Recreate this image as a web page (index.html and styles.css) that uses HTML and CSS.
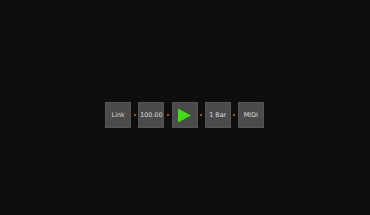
FILE: index.html
```html
<!DOCTYPE html>
<html>
<head>
<meta charset="utf-8">
<link rel="stylesheet" href="styles.css">
</head>
<body>
<div class="stage">
  <div class="bar">
    <div class="btn"><span>Link</span></div>
    <div class="dot"></div>
    <div class="btn"><span>100.00</span></div>
    <div class="dot"></div>
    <div class="btn play">
      <svg width="15" height="15" viewBox="0 0 15 15"><polygon points="1,0.5 14,7.5 1,14.5" fill="#3ee10f"/></svg>
    </div>
    <div class="dot"></div>
    <div class="btn"><span>1 Bar</span></div>
    <div class="dot"></div>
    <div class="btn"><span>MIDI</span></div>
  </div>
</div>
</body>
</html>
```
FILE: styles.css
```css
html, body {
  margin: 0;
  padding: 0;
  background: #0e0e0e;
  width: 370px;
  height: 215px;
  overflow: hidden;
}
.stage {
  display: flex;
  justify-content: center;
  padding-top: 102px;
}
.bar {
  display: flex;
  align-items: center;
  margin-left: -1px;
}
.btn {
  width: 26px;
  height: 26px;
  background: #4b4b4b;
  box-sizing: border-box;
  border: 1px solid #545454;
  display: flex;
  align-items: center;
  justify-content: center;
  color: #dedede;
  font-family: "DejaVu Sans", sans-serif;
  font-size: 6.4px;
}
.dot {
  width: 2px;
  height: 2px;
  margin: 0 2.6px;
  background: #e06a10;
  border-radius: 1px;
}
```
